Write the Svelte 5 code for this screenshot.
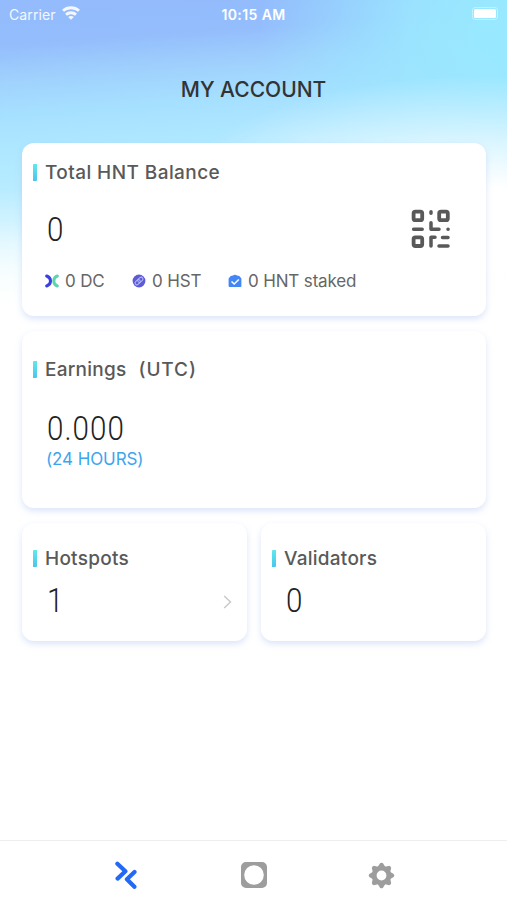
<script lang="ts">
  const account = {
    balance: '0',
    dc: '0 DC',
    hst: '0 HST',
    staked: '0 HNT staked',
    earnings: '0.000',
    hotspots: '1',
    validators: '0'
  };

  let tab = $state('account');
  const teeth = [0, 45, 90, 135, 180, 225, 270, 315];
</script>

<div class="screen">
  <header class="status">
    <div class="carrier">
      <span>Carrier</span>
      <svg width="18" height="14" viewBox="0 0 18 14" fill="none" stroke="#fff" stroke-width="2.8">
        <path d="M1 4.800C5.400.7 12.600.7 17 4.800" />
        <path d="M4 8.600c2.800-2.500 7.200-2.500 10 0" />
        <path d="M9 13.800 6.200 11.100c1.600-1.400 4-1.400 5.600 0z" fill="#fff" stroke="none" />
      </svg>
    </div>
    <span class="time">10:15 AM</span>
    <div class="battery"><i></i></div>
  </header>

  <h1>MY ACCOUNT</h1>

  <main>
    <section class="card balance">
      <h2><span class="total">Total HNT Balance</span></h2>
      <div class="row">
        <span class="number">{account.balance}</span>
        <svg width="40" height="40" viewBox="0 0 40 40" fill="none" stroke="#595959" stroke-width="3.8" stroke-linecap="round" stroke-linejoin="round">
          <rect x="2.6" y="2.6" width="8.6" height="8.6" rx="1.8" />
          <rect x="28.2" y="2.6" width="8.6" height="8.6" rx="1.8" />
          <rect x="2.6" y="28.4" width="8.600" height="8.600" rx="1.8" />
          <path d="M20 2.800v1.400M20 13.800v6.400h8M2.600 20.200h8.600M37 20.200h.1M20 37v-8.800h4M31.500 28.400h5.500M28 37h9" stroke-width="3.5" />
        </svg>
      </div>
      <div class="tokens">
        <span class="token dc">
          <svg width="14" height="14" viewBox="0 0 14 14" fill="none" stroke-width="3" stroke-linecap="round">
            <path d="M12.300 2C9.600 3 8.800 5 8.800 7s.8 4 3.500 5" stroke="#5fd3ad" />
            <path d="M1.700 2C4.500 3 5.500 5 5.500 7s-1 4-3.800 5" stroke="#3b3fe0" />
          </svg>
          <span>{account.dc}</span>
        </span>
        <span class="token hst">
          <svg width="14" height="14" viewBox="0 0 14 14" fill="none">
            <circle cx="7" cy="7" r="6.400" fill="#5b5bd8" />
            <g transform="rotate(-42 7 7)" stroke="#b9b8f5" stroke-width="1">
              <rect x="2.300" y="5.200" width="5.800" height="3.600" rx="1.800" />
              <rect x="5.900" y="5.200" width="5.800" height="3.600" rx="1.800" />
            </g>
          </svg>
          <span>{account.hst}</span>
        </span>
        <span class="token">
          <svg width="14" height="14" viewBox="0 0 14 14" fill="none">
            <path d="M.6 4.500 2.700 2 5 1.600C6.200.4 7.800.4 9 1.600l2.300.4 2.100 2.500V12q0 1-1 1H1.600q-1 0-1-1z" fill="#4387f6" />
            <path d="m3.500 7.500 2.700 2.500 4.600-4.500" stroke="#fff" stroke-width="1.500" />
          </svg>
          <span>{account.staked}</span>
        </span>
      </div>
    </section>

    <section class="card earnings">
      <h2><span>Earnings<span class="utc">(UTC)</span></span></h2>
      <span class="number">{account.earnings}</span>
      <span class="period">(24 HOURS)</span>
    </section>

    <div class="pair">
      <section class="card small">
        <h2><span>Hotspots</span></h2>
        <div class="row">
          <span class="number">{account.hotspots}</span>
          <svg class="chevron" width="9" height="14" viewBox="0 0 9 14" fill="none" stroke="#c8c8cb" stroke-width="1.4">
            <path d="m1.200 1 6.300 6-6.300 6" />
          </svg>
        </div>
      </section>
      <section class="card small">
        <h2><span>Validators</span></h2>
        <div class="row">
          <span class="number">{account.validators}</span>
        </div>
      </section>
    </div>
  </main>

  <nav>
    <button aria-label="Account" class:active={tab === 'account'} onclick={() => (tab = 'account')}>
      <svg width="28" height="28" viewBox="0 0 28 28" fill="none" stroke="currentColor" stroke-width="4.200" stroke-linecap="round" stroke-linejoin="round">
        <path d="m4.400 2.800 8 7.500-7.800 7.300M21.500 11l-7.600 7.300 7.500 7.500" />
      </svg>
    </button>
    <button aria-label="Explore" class:active={tab === 'explore'} onclick={() => (tab = 'explore')}>
      <svg width="28" height="28" viewBox="0 0 28 28">
        <path fill="currentColor" fill-rule="evenodd" d="M6 1h16a5 5 0 0 1 5 5v16a5 5 0 0 1-5 5H6a5 5 0 0 1-5-5V6a5 5 0 0 1 5-5zm8 3.200a9.800 9.800 0 1 0 0 19.600 9.800 9.800 0 0 0 0-19.600z" />
      </svg>
    </button>
    <button aria-label="Settings" class:active={tab === 'settings'} onclick={() => (tab = 'settings')}>
      <svg width="28" height="28" viewBox="0 0 28 28">
        <circle cx="14.500" cy="14.500" r="7.300" fill="none" stroke="currentColor" stroke-width="4.800" />
        {#each teeth as angle}
          <path d="M10.400 6.500 13 2.300q1.500-1.200 3 0l2.600 4.200z" fill="currentColor" transform="rotate({angle} 14.500 14.500)" />
        {/each}
      </svg>
    </button>
  </nav>
</div>

<style>
  :global(body) {
    margin: 0;
  }
  .screen {
    display: flex;
    flex-direction: column;
    width: 507px;
    height: 900px;
    overflow: hidden;
    font-family: Inter, "Liberation Sans", sans-serif;
    background:
      linear-gradient(rgba(255,255,255,0) 190px, #fff 315px),
      radial-gradient(ellipse 330px 150px at 480px 225px, #fff 25%, rgba(255,255,255,0) 100%),
      radial-gradient(ellipse 270px 190px at 530px 30px, #98e9ff 15%, rgba(155,230,255,.9) 45%, rgba(160,225,255,0) 100%),
      linear-gradient(176deg, #93bbfd 0, #94bdfc 45px, #a0d2fd 82px, #a6e0ff 115px, #b0e9ff 160px, #c2efff 225px, #e8fafe 275px, #fff 330px);
  }
  .status {
    display: grid;
    grid-template-columns: 1fr auto 1fr;
    align-items: center;
    height: 28px;
    box-sizing: border-box;
    padding: 0 9px;
    color: #fff;
    font-size: 14px;
  }
  .carrier {
    display: flex;
    align-items: center;
    gap: 6px;
    opacity: .9;
    letter-spacing: .1px;
  }
  .carrier svg {
    margin-top: -2px;
  }
  .time {
    font-weight: 600;
    font-size: 14px;
    letter-spacing: .4px;
  }
  .battery {
    justify-self: end;
    width: 22px;
    height: 9px;
    padding: 1px;
    margin-top: -2px;
    border: 1px solid rgba(255,255,255,.4);
    border-radius: 3px;
  }
  .battery i {
    display: block;
    height: 9px;
    border-radius: 1.5px;
    background: #fff;
  }
  h1 {
    margin: 47px 0 0;
    height: 68px;
    line-height: 29px;
    text-align: center;
    font-size: 21px;
    font-weight: 450;
    color: #333;
    letter-spacing: 0;
  }
  main {
    display: flex;
    flex-direction: column;
    gap: 15px;
    width: 464px;
    margin-left: 22px;
    flex: 1;
  }
  .card {
    display: flex;
    flex-direction: column;
    box-sizing: border-box;
    border-radius: 12px;
    background: #fff;
    box-shadow: 0 3px 6px rgba(170,190,240,.42);
  }
  .balance {
    height: 173px;
    padding-top: 17px;
  }
  .earnings {
    height: 177px;
    padding-top: 26px;
  }
  .pair {
    display: grid;
    grid-template-columns: 225px 225px;
    gap: 14px;
  }
  .small {
    height: 118px;
    padding-top: 23px;
  }
  h2 {
    display: flex;
    align-items: center;
    gap: 8px;
    height: 24px;
    margin: 0 0 0 11px;
    font-size: 19px;
    font-weight: 500;
    color: #595959;
    letter-spacing: .25px;
    white-space: nowrap;
  }
  h2::before {
    content: "";
    width: 4px;
    height: 17px;
    background: linear-gradient(#5ee9ec, #4bc5ea);
    border-radius: 1px 0 1px 0;
  }
  .total {
    letter-spacing: .42px;
  }
  .utc {
    margin-left: 12px;
    letter-spacing: .9px;
  }
  .row {
    display: flex;
    align-items: center;
    justify-content: space-between;
  }
  .number {
    font-family: Roboto, "Liberation Sans", sans-serif;
    font-size: 34px;
    line-height: 40px;
    font-weight: 300;
    color: #222;
    letter-spacing: 1.2px;
    margin-left: 25px;
    transform: scaleX(.87);
    transform-origin: left;
  }
  .balance .row {
    margin-top: 25px;
    padding-right: 35px;
  }
  .earnings .number {
    margin-top: 27px;
  }
  .period {
    margin: 1px 0 0 24px;
    font-size: 17px;
    line-height: 20px;
    letter-spacing: -.1px;
    color: #3da5ee;
  }
  .small .row {
    margin-top: 10px;
    padding-right: 15px;
  }
  .chevron {
    margin-top: 4px;
  }
  .tokens {
    display: flex;
    margin: 21px 0 0 23px;
    color: #666;
    font-size: 17px;
    line-height: 22px;
    letter-spacing: -.15px;
    white-space: nowrap;
  }
  .token {
    display: flex;
    align-items: center;
    gap: 6px;
  }
  .dc {
    width: 87px;
  }
  .hst {
    width: 96px;
  }
  nav {
    display: flex;
    justify-content: space-around;
    height: 60px;
    padding: 0 62px 0 63px;
    box-sizing: border-box;
    border-top: 1px solid #eee;
    background: #fff;
  }
  button {
    display: flex;
    margin: 20px 0 0;
    padding: 0;
    height: 28px;
    border: 0;
    background: none;
    color: #9d9d9d;
    cursor: pointer;
  }
  button.active {
    color: #2469f6;
  }
</style>
